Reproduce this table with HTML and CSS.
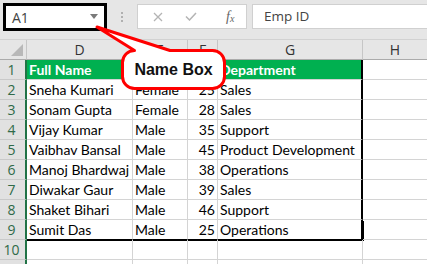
FILE: index.html
```html
<!DOCTYPE html>
<html lang="en">
<head>
<meta charset="utf-8">
<title>Employees</title>
<link rel="stylesheet" href="styles.css">
</head>
<body>
<div class="app">
  <div class="toolbar">
    <div class="namebox">
      <span class="ref">A1</span>
      <svg class="caret" width="8" height="5" viewBox="0 0 8 5"><path d="M0 0H8L4 5Z" fill="#7a7a7a"/></svg>
    </div>
    <div class="grip"><i></i><i></i><i></i></div>
    <div class="fbuttons">
      <svg class="fbtn" width="10" height="10" viewBox="0 0 10 10"><path d="M1 1L9 9M9 1L1 9" stroke="#b4b4b4" stroke-width="1.3" fill="none"/></svg>
      <svg class="fbtn" width="12" height="9" viewBox="0 0 12 9"><path d="M1 4.5L4.5 8L11 1" stroke="#b4b4b4" stroke-width="1.5" fill="none"/></svg>
      <span class="fx">f<sub>x</sub></span>
    </div>
    <div class="finput">Emp ID</div>
  </div>

  <div class="sheet">
    <div class="corner"><svg width="12" height="12" viewBox="0 0 12 12"><path d="M12 0V12H0Z" fill="#b8b8b8"/></svg></div>
    <div class="ch">D</div><div class="ch">E</div><div class="ch">F</div><div class="ch">G</div><div class="ch last">H</div>

    <div class="rh">1</div>
    <div class="c hd">Full Name</div><div class="c hd"></div><div class="c hd n"></div><div class="c hd rb">Department</div><div class="c h"></div>

    <div class="rh">2</div>
    <div class="c">Sneha Kumari</div><div class="c">Female</div><div class="c n">25</div><div class="c rb">Sales</div><div class="c h"></div>

    <div class="rh">3</div>
    <div class="c">Sonam Gupta</div><div class="c">Female</div><div class="c n">28</div><div class="c rb">Sales</div><div class="c h"></div>

    <div class="rh">4</div>
    <div class="c">Vijay Kumar</div><div class="c">Male</div><div class="c n">35</div><div class="c rb">Support</div><div class="c h"></div>

    <div class="rh">5</div>
    <div class="c">Vaibhav Bansal</div><div class="c">Male</div><div class="c n">45</div><div class="c rb">Product Development</div><div class="c h"></div>

    <div class="rh">6</div>
    <div class="c">Manoj Bhardwaj</div><div class="c">Male</div><div class="c n">38</div><div class="c rb">Operations</div><div class="c h"></div>

    <div class="rh">7</div>
    <div class="c">Diwakar Gaur</div><div class="c">Male</div><div class="c n">39</div><div class="c rb">Sales</div><div class="c h"></div>

    <div class="rh">8</div>
    <div class="c">Shaket Bihari</div><div class="c">Male</div><div class="c n">46</div><div class="c rb">Support</div><div class="c h"></div>

    <div class="rh">9</div>
    <div class="c bb">Sumit Das</div><div class="c bb">Male</div><div class="c n bb">25</div><div class="c rb bb">Operations</div><div class="c h"></div>

    <div class="rh">10</div>
    <div class="c"></div><div class="c"></div><div class="c"></div><div class="c"></div><div class="c h"></div>

    <div class="rh"></div>
    <div class="c"></div><div class="c"></div><div class="c"></div><div class="c"></div><div class="c h"></div>
  </div>

  <div class="callout">
    <svg class="callout-shape" width="136" height="70" viewBox="0 0 136 70">
      <path d="M3 3L76 26.5H118.5A12 12 0 0 1 130.5 38.5V52.5A12 12 0 0 1 118.5 64.5H40.5A12 12 0 0 1 28.5 52.5V38.5A12 12 0 0 1 40.5 26.5Z" fill="#fff" stroke="#ff0000" stroke-width="3" stroke-linejoin="round"/>
    </svg>
    <div class="callout-label">Name Box</div>
  </div>
</div>
</body>
</html>
```
FILE: styles.css
```css
* { box-sizing: border-box; }

html, body {
  margin: 0;
  padding: 0;
  background: #fff;
  overflow: hidden;
}

.app {
  position: relative;
  width: 427px;
  height: 264px;
  overflow: hidden;
  font-family: "Open Sans", "Liberation Sans", sans-serif;
}

/* formula bar */
.toolbar {
  display: flex;
  align-items: flex-start;
  height: 40px;
  background: #e6e6e6;
  border-bottom: 1px solid #d2d2d2;
}

.namebox {
  display: flex;
  align-items: center;
  justify-content: space-between;
  width: 104px;
  height: 28px;
  margin: 3px 0 0 3px;
  padding: 0 6px 0 6px;
  background: #fff;
  border: 3px solid #000;
}

.ref {
  font-size: 14px;
  color: #444;
}

.caret { margin-top: -2px; }

.grip {
  display: flex;
  flex-direction: column;
  align-items: center;
  gap: 2px;
  width: 30px;
  padding-top: 12px;
}

.grip i {
  display: block;
  width: 2px;
  height: 2px;
  background: #b0b0b0;
}

.fbuttons {
  display: flex;
  align-items: center;
  width: 110px;
  height: 25px;
  margin-top: 4px;
  padding-left: 15px;
  background: #fff;
  border: 1px solid #d0d0d0;
}

.fbtn + .fbtn { margin-left: 22px; }

.fx {
  margin-left: 29px;
  font-family: "Liberation Serif", serif;
  font-style: italic;
  font-size: 14px;
  color: #666;
}

.fx sub {
  font-size: 10px;
  vertical-align: -1px;
}

.finput {
  flex: 1;
  height: 25px;
  margin: 4px -4px 0 5px;
  padding-left: 11px;
  background: #fff;
  border: 1px solid #d0d0d0;
  font-size: 13.5px;
  line-height: 23px;
  color: #444;
}

/* worksheet grid */
.sheet {
  display: grid;
  grid-template-columns: 27px 106px 55px 30px 145px 1fr;
  grid-template-rows: 20px;
  grid-auto-rows: 20px;
}

.corner {
  display: flex;
  align-items: flex-end;
  justify-content: flex-end;
  padding: 0 3px 3px 0;
  background: #e6e6e6;
  border-right: 1px solid #c6c6c6;
  border-bottom: 1px solid #ababab;
}

.ch {
  background: #e6e6e6;
  border-right: 1px solid #c6c6c6;
  border-bottom: 1px solid #ababab;
  text-align: center;
  font-size: 14px;
  line-height: 19px;
  color: #333;
}

.ch.last { border-right: none; }

.rh {
  background: #e1e1e1;
  border-right: 2px solid #217346;
  border-bottom: 1px solid #c9c9c9;
  text-align: center;
  font-size: 14px;
  line-height: 20px;
  color: #2f6a48;
  padding-right: 2px;
}

.c {
  padding: 0 2px;
  border-right: 1px solid #d4d4d4;
  border-bottom: 1px solid #d4d4d4;
  font-family: "Lato", "Liberation Sans", sans-serif;
  font-size: 14px;
  line-height: 20px;
  color: #000;
  white-space: nowrap;
}

.c.n { text-align: right; }

.c.h { border-right: none; }

.c.hd {
  background: #00b050;
  border-right-color: #00b050;
  color: #fff;
  font-weight: bold;
}

.c.rb { border-right: 2px solid #000; }

.c.bb {
  border-bottom: 1px solid #000;
  box-shadow: 0 1px 0 #000;
}

.c.rb.bb { box-shadow: 0 1px 0 #000, 1px 1px 0 #000; }

/* annotation bubble pointing at the name box */
.callout {
  position: absolute;
  left: 94px;
  top: 24px;
  width: 136px;
  height: 70px;
  padding: 26px 0 0 28px;
}

.callout-shape {
  position: absolute;
  left: 0;
  top: 0;
}

.callout-label {
  position: relative;
  display: flex;
  align-items: center;
  justify-content: center;
  width: 103px;
  height: 39px;
  font-family: "Liberation Sans", Arial, sans-serif;
  font-weight: bold;
  font-size: 16px;
  color: #111;
}
```
